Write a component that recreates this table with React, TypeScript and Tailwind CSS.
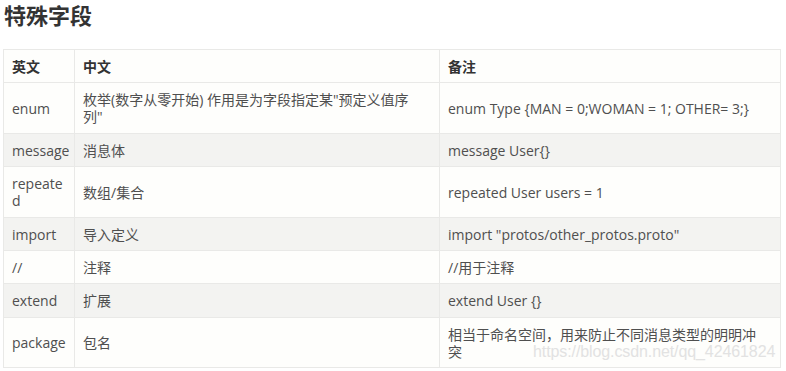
import React from 'react';

const rows: { en: React.ReactNode; zh: React.ReactNode; note: React.ReactNode }[] = [
  {
    en: 'enum',
    zh: (
      <>
        枚举(数字从零开始) 作用是为字段指定某"预定义值序
        <br />
        列"
      </>
    ),
    note: 'enum Type {MAN = 0;WOMAN = 1; OTHER= 3;}',
  },
  { en: 'message', zh: '消息体', note: 'message User{}' },
  {
    en: (
      <>
        repeate
        <br />d
      </>
    ),
    zh: '数组/集合',
    note: 'repeated User users = 1',
  },
  { en: 'import', zh: '导入定义', note: 'import "protos/other_protos.proto"' },
  { en: '//', zh: '注释', note: '//用于注释' },
  { en: 'extend', zh: '扩展', note: 'extend User {}' },
  {
    en: 'package',
    zh: '包名',
    note: (
      <>
        相当于命名空间，用来防止不同消息类型的明明冲
        <br />
        突
      </>
    ),
  },
];

const cell = 'border border-[#e9e9e7] px-2 pt-2 pb-[7.4px] align-middle';

export default function App() {
  return (
    <div
      className="relative w-[786px] h-[371px] bg-white overflow-hidden"
      style={{ fontFamily: '"Open Sans", "Noto Sans CJK SC", sans-serif' }}
    >
      <h2 className="pl-1 pt-0 text-[22px] leading-[30px] font-bold text-[#333]">特殊字段</h2>

      <table className="ml-[3px] mt-[19px] w-[778px] table-fixed border-collapse text-[14px] leading-[17px] text-[#4f4f4f]">
        <colgroup>
          <col className="w-[71px]" />
          <col className="w-[365px]" />
          <col />
        </colgroup>
        <thead>
          <tr className="bg-[#fefefc]">
            <th className={`${cell} text-left font-bold text-[#333]`}>英文</th>
            <th className={`${cell} text-left font-bold text-[#333]`}>中文</th>
            <th className={`${cell} text-left font-bold text-[#333]`}>备注</th>
          </tr>
        </thead>
        <tbody>
          {rows.map((r, i) => (
            <tr key={i} className={i % 2 === 1 ? 'bg-[#f3f3f1]' : 'bg-[#fefefc]'}>
              <td className={cell}>{r.en}</td>
              <td className={cell}>{r.zh}</td>
              <td className={cell}>{r.note}</td>
            </tr>
          ))}
        </tbody>
      </table>

      {/* watermark */}
      <div
        className="absolute left-[533px] top-[342px] text-[16px] leading-[20px] tracking-[-0.1px] text-[#e2e2e2] whitespace-nowrap"
        style={{ fontFamily: '"Liberation Sans", Arial, sans-serif' }}
      >
        https://blog.csdn.net/qq_42461824
      </div>
    </div>
  );
}
